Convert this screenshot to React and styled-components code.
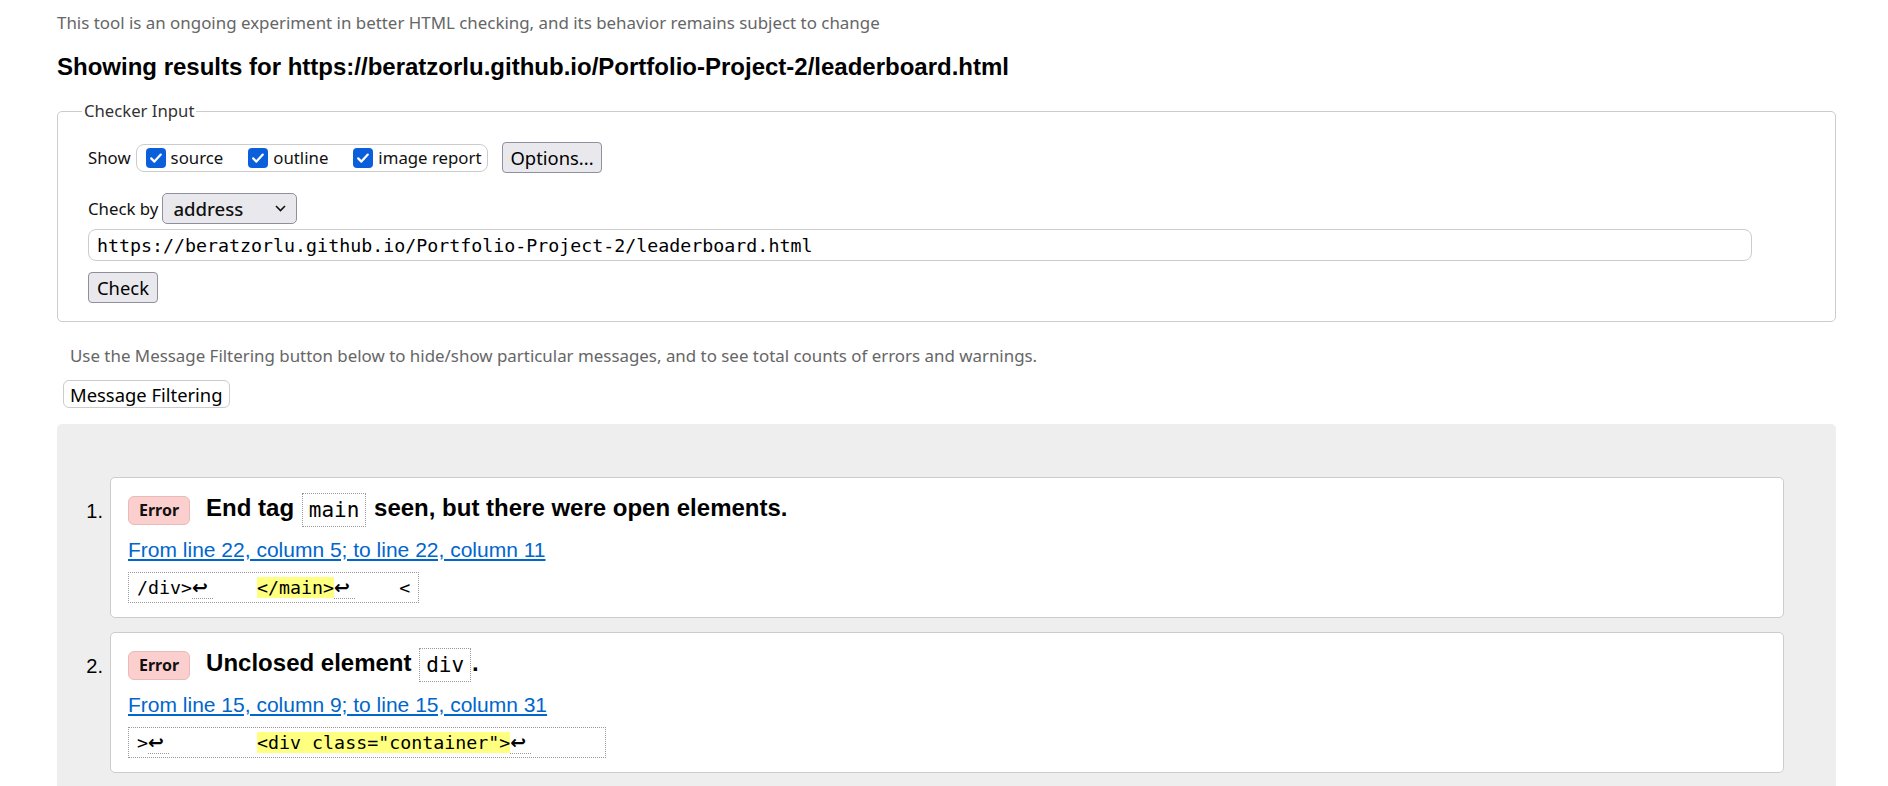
import React from "react";
import styled, { createGlobalStyle } from "styled-components";

const GlobalStyle = createGlobalStyle`
  html, body {
    margin: 0;
    padding: 0;
    background: #fff;
    overflow: hidden;
  }
  body {
    font-family: "Noto Sans", "Open Sans", sans-serif;
    color: #000;
  }
`;

const Page = styled.main`
  padding: 0 52px 0 57px;
`;

const Intro = styled.p`
  margin: 12px 0 0;
  font-size: 16.9px;
  line-height: 22px;
  color: #666;
`;

const Heading = styled.h2`
  margin: 19px 0 0;
  font-family: "Liberation Sans", Arial, sans-serif;
  font-size: 24px;
  line-height: 28px;
  font-weight: 700;
`;

const Fieldset = styled.fieldset`
  margin: 19px 0 0;
  padding: 20px 30px 18px 30px;
  border: 1px solid #ccc;
  border-radius: 5px;
  min-width: 0;
`;

const Legend = styled.legend`
  margin-left: -6px;
  padding: 0 2px;
  font-size: 16.7px;
  line-height: 22px;
  color: #333;
`;

const Row = styled.div`
  display: flex;
  align-items: center;
  margin-top: ${(p) => p.$mt || 0}px;
`;

const Label = styled.span`
  font-size: 16.8px;
  color: #111;
  margin-right: ${(p) => p.$mr || 0}px;
`;

const Toggles = styled.div`
  display: flex;
  align-items: center;
  gap: 25px;
  height: 28px;
  box-sizing: border-box;
  padding: 0 6px 0 9px;
  border: 1px solid #ccc;
  border-radius: 8px;
`;

const Toggle = styled.label`
  display: flex;
  align-items: center;
  gap: 5px;
  font-size: 16.8px;
  color: #111;
`;

const Tick = styled.span`
  display: flex;
  align-items: center;
  justify-content: center;
  width: 20px;
  height: 20px;
  border-radius: 4px;
  background: #0b5fdb;
`;

const Button = styled.button`
  box-sizing: border-box;
  height: ${(p) => p.$h || 31}px;
  padding: 0 ${(p) => p.$px || 8}px;
  margin-left: ${(p) => p.$ml || 0}px;
  font-family: inherit;
  font-size: 18.4px;
  color: #000;
  background: ${(p) => (p.$plain ? "#fff" : "#e9e9ed")};
  border: 1px solid ${(p) => (p.$plain ? "#ccc" : "#8f8f9d")};
  border-radius: ${(p) => (p.$plain ? 6 : 4)}px;
  cursor: pointer;
`;

const Select = styled.div`
  box-sizing: border-box;
  display: flex;
  align-items: center;
  justify-content: space-between;
  width: 135px;
  height: 31px;
  padding: 0 10px;
  background: #e9e9ed;
  border: 1px solid #8f8f9d;
  border-radius: 5px;
  font-size: 18.6px;
  font-weight: 500;
  color: #111;
`;

const UrlInput = styled.input`
  box-sizing: border-box;
  display: block;
  width: 1664px;
  height: 32px;
  margin-top: 5px;
  padding: 0 8px;
  border: 1px solid #ccc;
  border-radius: 8px;
  font-family: "DejaVu Sans Mono", "Liberation Mono", monospace;
  font-size: 18.3px;
  color: #000;
  outline: none;
`;

const Note = styled.p`
  margin: 23px 0 0 13px;
  font-size: 16.9px;
  line-height: 22px;
  color: #666;
`;

const Results = styled.section`
  margin-top: 16px;
  padding: 53px 52px 40px 0;
  background: #eee;
  border-radius: 5px;
`;

const MessageList = styled.ol`
  list-style: none;
  margin: 0;
  padding: 0;
  display: flex;
  flex-direction: column;
  gap: 14px;
`;

const Item = styled.li`
  display: flex;
  align-items: flex-start;
`;

const Num = styled.span`
  box-sizing: border-box;
  flex: 0 0 53px;
  padding: 22px 7px 0 0;
  text-align: right;
  font-family: "Liberation Sans", Arial, sans-serif;
  font-size: 20px;
  line-height: 24px;
`;

const Card = styled.div`
  flex: 1;
  background: #fff;
  border: 1px solid #ccc;
  border-radius: 5px;
  padding: 15px 17px 14px;
`;

const TitleRow = styled.div`
  display: flex;
  align-items: center;
  height: 34px;
`;

const Badge = styled.span`
  box-sizing: border-box;
  display: flex;
  align-items: center;
  height: 29px;
  padding: 0 10px;
  margin-right: 16px;
  background: #fccfcf;
  border: 1px solid #eab9b9;
  border-radius: 6px;
  font-size: 16px;
  font-weight: 700;
  color: #111;
`;

const Title = styled.h3`
  margin: 0;
  font-family: "Liberation Sans", Arial, sans-serif;
  font-size: 24px;
  font-weight: 700;
  white-space: pre;
`;

const Code = styled.code`
  display: inline-block;
  margin: 0 1px;
  padding: 0 6px;
  border: 1px dotted #999;
  font-family: "DejaVu Sans Mono", "Liberation Mono", monospace;
  font-size: 21px;
  font-weight: 400;
  line-height: 32px;
  vertical-align: middle;
`;

const Location = styled.a`
  display: block;
  margin-top: 11px;
  font-family: "Liberation Sans", Arial, sans-serif;
  font-size: 21px;
  line-height: 24px;
  color: #0066cc;
  text-decoration: underline;
  width: fit-content;
`;

const Extract = styled.code`
  display: inline-block;
  margin-top: 10px;
  padding: 1px 8px;
  border: 1px dotted #999;
  font-family: "DejaVu Sans Mono", "Liberation Mono", monospace;
  font-size: 18.3px;
  line-height: 27px;
  white-space: pre;
`;

const Mark = styled.mark`
  background: #ffff80;
  color: #000;
`;

const Ret = styled.span`
  display: inline-block;
  width: 21px;
  font-family: "DejaVu Sans", sans-serif;
  font-size: 19px;
  font-weight: 700;
  line-height: 22px;
  border-bottom: 1px dotted #999;
`;

const Check = () => (
  <Tick>
    <svg width="14" height="14" viewBox="0 0 14 14">
      <path d="M2.2 7.4 L5.4 10.6 L11.8 3.6" fill="none" stroke="#fff" strokeWidth="2.2" strokeLinecap="round" strokeLinejoin="round" />
    </svg>
  </Tick>
);

const Chevron = () => (
  <svg width="11" height="7" viewBox="0 0 11 7">
    <path d="M1 1 L5.5 5.5 L10 1" fill="none" stroke="#111" strokeWidth="1.6" />
  </svg>
);

const messages = [
  {
    title: ["End tag ", "main", " seen, but there were open elements."],
    location: "From line 22, column 5; to line 22, column 11",
    extract: (
      <>
        /div&gt;<Ret>↩</Ret>    <Mark>&lt;/main&gt;</Mark><Ret>↩</Ret>    &lt;
      </>
    ),
  },
  {
    title: ["Unclosed element ", "div", "."],
    location: "From line 15, column 9; to line 15, column 31",
    extract: (
      <>
        &gt;<Ret>↩</Ret>        <Mark>&lt;div class="container"&gt;</Mark><Ret>↩</Ret>{"      "}
      </>
    ),
  },
];

export default function App() {
  return (
    <Page>
      <GlobalStyle />
      <Intro>
        This tool is an ongoing experiment in better HTML checking, and its behavior remains subject to change
      </Intro>
      <Heading>Showing results for https://beratzorlu.github.io/Portfolio-Project-2/leaderboard.html</Heading>

      <Fieldset>
        <Legend>Checker Input</Legend>
        <Row>
          <Label $mr={5}>Show</Label>
          <Toggles>
            <Toggle><Check />source</Toggle>
            <Toggle><Check />outline</Toggle>
            <Toggle><Check />image report</Toggle>
          </Toggles>
          <Button $ml={14} $px={7}>Options...</Button>
        </Row>
        <Row $mt={20}>
          <Label $mr={4}>Check by</Label>
          <Select>
            address
            <Chevron />
          </Select>
        </Row>
        <UrlInput readOnly defaultValue="https://beratzorlu.github.io/Portfolio-Project-2/leaderboard.html" />
        <Row $mt={11}>
          <Button $px={8}>Check</Button>
        </Row>
      </Fieldset>

      <Note>
        Use the Message Filtering button below to hide/show particular messages, and to see total counts of errors and warnings.
      </Note>
      <Row $mt={13}>
        <Button $plain $h={28} $px={6} $ml={6}>Message Filtering</Button>
      </Row>

      <Results>
        <MessageList>
          {messages.map((m, i) => (
            <Item key={i}>
              <Num>{i + 1}.</Num>
              <Card>
                <TitleRow>
                  <Badge>Error</Badge>
                  <Title>
                    {m.title[0]}
                    <Code>{m.title[1]}</Code>
                    {m.title[2]}
                  </Title>
                </TitleRow>
                <Location href="#">{m.location}</Location>
                <div>
                  <Extract>{m.extract}</Extract>
                </div>
              </Card>
            </Item>
          ))}
        </MessageList>
      </Results>
    </Page>
  );
}
